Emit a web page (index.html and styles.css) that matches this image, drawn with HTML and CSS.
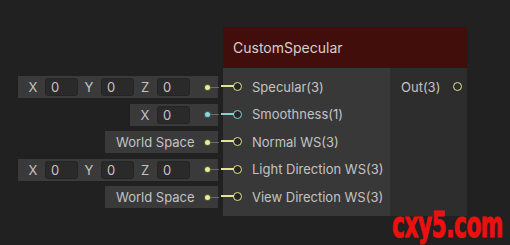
FILE: index.html
```html
<!DOCTYPE html>
<html lang="en">
<head>
  <meta charset="UTF-8">
  <title>CustomSpecular Node</title>
  <link rel="stylesheet" href="styles.css">
</head>
<body>
  <div class="graph">
    <!-- default value fields for the node inputs -->
    <div class="fields">
      <div class="field-row">
        <span class="axis">X</span><span class="num">0</span>
        <span class="axis">Y</span><span class="num">0</span>
        <span class="axis">Z</span><span class="num">0</span>
        <span class="dot yellow"></span>
      </div>
      <div class="field-row">
        <span class="axis">X</span><span class="num">0</span>
        <span class="dot cyan"></span>
      </div>
      <div class="field-row">
        <span class="space">World Space</span>
        <span class="dot yellow"></span>
      </div>
      <div class="field-row">
        <span class="axis">X</span><span class="num">0</span>
        <span class="axis">Y</span><span class="num">0</span>
        <span class="axis">Z</span><span class="num">0</span>
        <span class="dot yellow"></span>
      </div>
      <div class="field-row">
        <span class="space">World Space</span>
        <span class="dot yellow"></span>
      </div>
    </div>

    <div class="node">
      <div class="node-title">CustomSpecular</div>
      <div class="node-body">
        <div class="inputs">
          <div class="port"><span class="ring yellow wired"></span>Specular(3)</div>
          <div class="port"><span class="ring cyan wired"></span>Smoothness(1)</div>
          <div class="port"><span class="ring yellow wired"></span>Normal WS(3)</div>
          <div class="port"><span class="ring yellow wired"></span>Light Direction WS(3)</div>
          <div class="port"><span class="ring yellow wired"></span>View Direction WS(3)</div>
        </div>
        <div class="outputs">
          <div class="port out">Out(3)<span class="ring yellow"></span></div>
        </div>
      </div>
    </div>
  </div>

  <div class="watermark">cxy5.com</div>
</body>
</html>
```

FILE: styles.css
```css
body {
  margin: 0;
  background: #212121;
  font-family: Inter, "Noto Sans", sans-serif;
  width: 510px;
  height: 245px;
  overflow: hidden;
  position: relative;
}

.graph {
  display: flex;
  gap: 5px;
  padding: 27px 0 0 18px;
}

.fields {
  width: 200px;
  margin-top: 49px;
  display: flex;
  flex-direction: column;
  align-items: flex-end;
  gap: 5.5px;
}

.field-row {
  height: 22px;
  background: #3a3a3a;
  display: flex;
  align-items: center;
  padding: 0 8.5px 0 9px;
  font-size: 13px;
  color: #c4c4c4;
}

.axis {
  width: 12px;
  margin-right: 6px;
  text-align: center;
}

.num {
  width: 33px;
  height: 18px;
  box-sizing: border-box;
  background: #2a2a2a;
  border: 1px solid #242424;
  border-radius: 3px;
  padding-left: 5px;
  line-height: 16px;
  margin-right: 5px;
}

.space {
  width: 79px;
  padding-left: 2px;
}

.dot {
  width: 5px;
  height: 5px;
  border-radius: 50%;
  margin-left: 9.5px;
  position: relative;
}

.dot.yellow { background: #e9ec95; box-shadow: 0 0 0 1px #55563a; }
.dot.cyan { background: #8ad6da; box-shadow: 0 0 0 1px #3d5a5c; }

/* short grey stub leaving the field towards the node */
.dot::after {
  content: "";
  position: absolute;
  left: 5px;
  top: 2px;
  width: 9px;
  height: 1px;
  background: #6b6b6b;
}

.node {
  width: 244px;
  height: 189px;
  display: flex;
  flex-direction: column;
}

.node-title {
  height: 41px;
  background: #420e0c;
  color: #d6d0d0;
  font-size: 14px;
  line-height: 41px;
  padding-left: 10px;
}

.node-body {
  flex: 1;
  display: flex;
}

.inputs {
  width: 167px;
  background: #383838;
  padding-top: 5px;
}

.outputs {
  flex: 1;
  background: #2d2d2d;
  padding-top: 5px;
}

.port {
  height: 27.5px;
  display: flex;
  align-items: center;
  font-size: 13px;
  color: #c3c3c3;
}

.inputs .port {
  padding-left: 10px;
}

.ring {
  width: 9px;
  height: 9px;
  box-sizing: border-box;
  border-radius: 50%;
  border: 1.5px solid;
  background: #262626;
  margin-right: 10px;
  position: relative;
}

.ring.yellow { border-color: #e2e593; }
.ring.cyan { border-color: #86d1d5; }

/* coloured wire into the input port */
.ring.wired::before {
  content: "";
  position: absolute;
  right: 7px;
  top: 2px;
  width: 13px;
  height: 2px;
}

.ring.yellow.wired::before { background: #e2e593; }
.ring.cyan.wired::before { background: #86d1d5; }

.port.out {
  padding-left: 11px;
  gap: 13px;
}

.port.out .ring {
  margin-right: 0;
  background: transparent;
}

.watermark {
  position: absolute;
  left: 392px;
  top: 203px;
  font-family: "DejaVu Sans Condensed", "DejaVu Sans", sans-serif;
  font-weight: bold;
  font-size: 30px;
  color: #ee0f0f;
  letter-spacing: -0.5px;
  -webkit-text-stroke: 0.8px #ee0f0f;
  transform: scale(0.8, 1.2);
  transform-origin: left top;
}
```
